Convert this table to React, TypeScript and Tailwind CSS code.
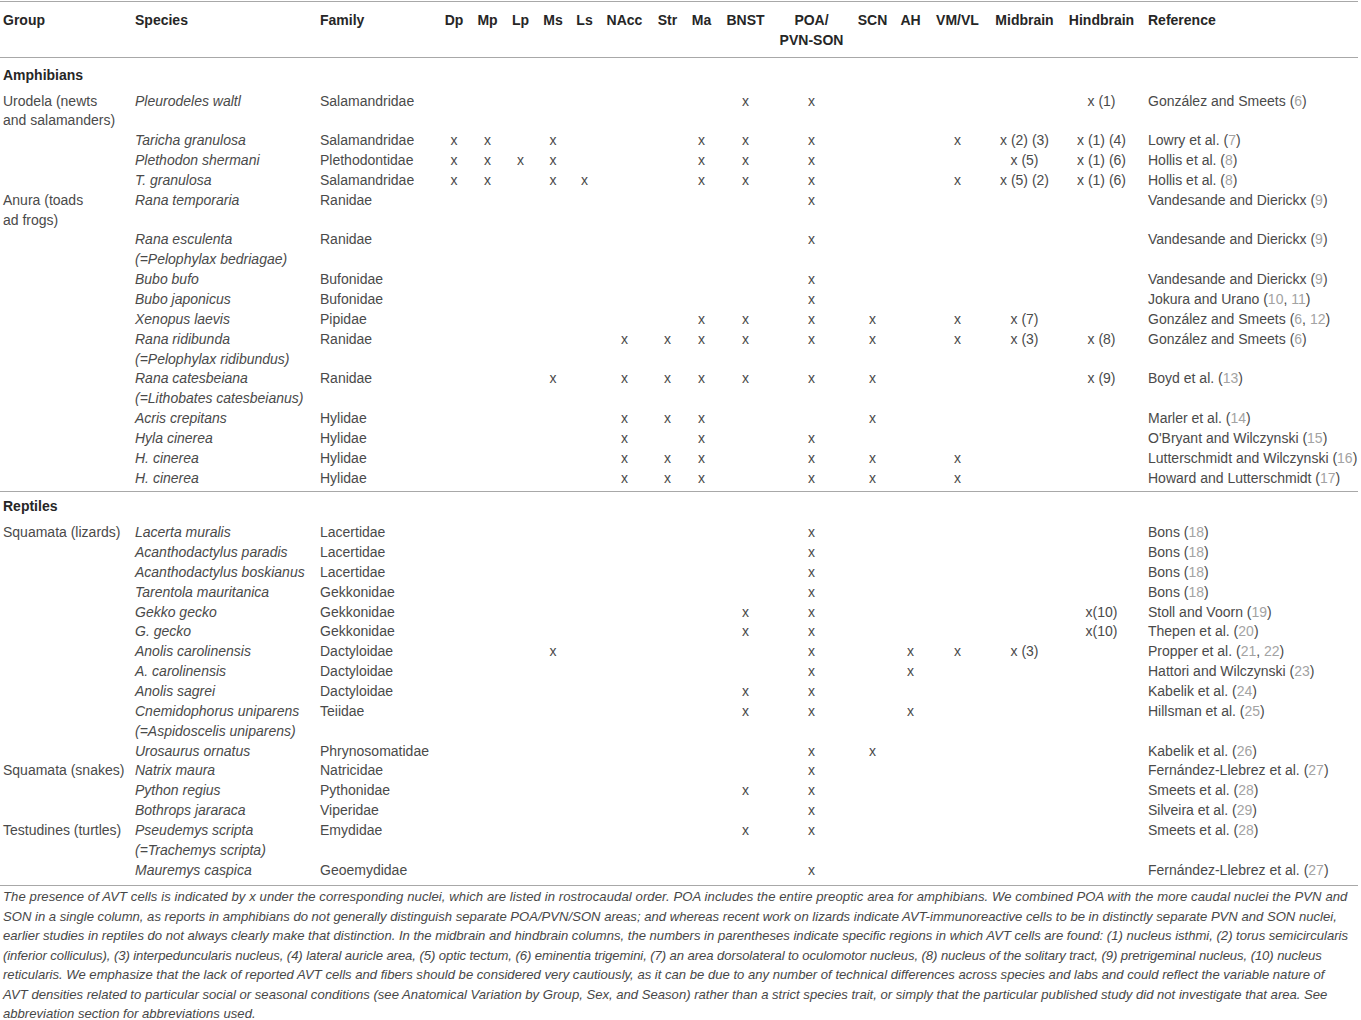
import React from "react";

const GRID =
  "grid grid-cols-[135px_185px_117px_34px_33px_33px_32px_31px_49px_37px_31px_57px_75px_47px_29px_65px_69px_85px_1fr]";

const KEYS = ["Dp", "Mp", "Lp", "Ms", "Ls", "NAcc", "Str", "Ma", "BNST", "POA", "SCN", "AH", "VM", "Mid", "Hind"] as const;

type Row = {
  g?: string[];
  s: string[];
  f: string;
  m: Partial<Record<(typeof KEYS)[number], string>>;
  r: string;
  n: string[];
};

const amphibians: Row[] = [
  { g: ["Urodela (newts", "and salamanders)"], s: ["Pleurodeles waltl"], f: "Salamandridae", m: { BNST: "x", POA: "x", Hind: "x (1)" }, r: "González and Smeets", n: ["6"] },
  { s: ["Taricha granulosa"], f: "Salamandridae", m: { Dp: "x", Mp: "x", Ms: "x", Ma: "x", BNST: "x", POA: "x", VM: "x", Mid: "x (2) (3)", Hind: "x (1) (4)" }, r: "Lowry et al.", n: ["7"] },
  { s: ["Plethodon shermani"], f: "Plethodontidae", m: { Dp: "x", Mp: "x", Lp: "x", Ms: "x", Ma: "x", BNST: "x", POA: "x", Mid: "x (5)", Hind: "x (1) (6)" }, r: "Hollis et al.", n: ["8"] },
  { s: ["T. granulosa"], f: "Salamandridae", m: { Dp: "x", Mp: "x", Ms: "x", Ls: "x", Ma: "x", BNST: "x", POA: "x", VM: "x", Mid: "x (5) (2)", Hind: "x (1) (6)" }, r: "Hollis et al.", n: ["8"] },
  { g: ["Anura (toads", "ad frogs)"], s: ["Rana temporaria"], f: "Ranidae", m: { POA: "x" }, r: "Vandesande and Dierickx", n: ["9"] },
  { s: ["Rana esculenta", "(=Pelophylax bedriagae)"], f: "Ranidae", m: { POA: "x" }, r: "Vandesande and Dierickx", n: ["9"] },
  { s: ["Bubo bufo"], f: "Bufonidae", m: { POA: "x" }, r: "Vandesande and Dierickx", n: ["9"] },
  { s: ["Bubo japonicus"], f: "Bufonidae", m: { POA: "x" }, r: "Jokura and Urano", n: ["10", "11"] },
  { s: ["Xenopus laevis"], f: "Pipidae", m: { Ma: "x", BNST: "x", POA: "x", SCN: "x", VM: "x", Mid: "x (7)" }, r: "González and Smeets", n: ["6", "12"] },
  { s: ["Rana ridibunda", "(=Pelophylax ridibundus)"], f: "Ranidae", m: { NAcc: "x", Str: "x", Ma: "x", BNST: "x", POA: "x", SCN: "x", VM: "x", Mid: "x (3)", Hind: "x (8)" }, r: "González and Smeets", n: ["6"] },
  { s: ["Rana catesbeiana", "(=Lithobates catesbeianus)"], f: "Ranidae", m: { Ms: "x", NAcc: "x", Str: "x", Ma: "x", BNST: "x", POA: "x", SCN: "x", Hind: "x (9)" }, r: "Boyd et al.", n: ["13"] },
  { s: ["Acris crepitans"], f: "Hylidae", m: { NAcc: "x", Str: "x", Ma: "x", SCN: "x" }, r: "Marler et al.", n: ["14"] },
  { s: ["Hyla cinerea"], f: "Hylidae", m: { NAcc: "x", Ma: "x", POA: "x" }, r: "O'Bryant and Wilczynski", n: ["15"] },
  { s: ["H. cinerea"], f: "Hylidae", m: { NAcc: "x", Str: "x", Ma: "x", POA: "x", SCN: "x", VM: "x" }, r: "Lutterschmidt and Wilczynski", n: ["16"] },
  { s: ["H. cinerea"], f: "Hylidae", m: { NAcc: "x", Str: "x", Ma: "x", POA: "x", SCN: "x", VM: "x" }, r: "Howard and Lutterschmidt", n: ["17"] },
];

const reptiles: Row[] = [
  { g: ["Squamata (lizards)"], s: ["Lacerta muralis"], f: "Lacertidae", m: { POA: "x" }, r: "Bons", n: ["18"] },
  { s: ["Acanthodactylus paradis"], f: "Lacertidae", m: { POA: "x" }, r: "Bons", n: ["18"] },
  { s: ["Acanthodactylus boskianus"], f: "Lacertidae", m: { POA: "x" }, r: "Bons", n: ["18"] },
  { s: ["Tarentola mauritanica"], f: "Gekkonidae", m: { POA: "x" }, r: "Bons", n: ["18"] },
  { s: ["Gekko gecko"], f: "Gekkonidae", m: { BNST: "x", POA: "x", Hind: "x(10)" }, r: "Stoll and Voorn", n: ["19"] },
  { s: ["G. gecko"], f: "Gekkonidae", m: { BNST: "x", POA: "x", Hind: "x(10)" }, r: "Thepen et al.", n: ["20"] },
  { s: ["Anolis carolinensis"], f: "Dactyloidae", m: { Ms: "x", POA: "x", AH: "x", VM: "x", Mid: "x (3)" }, r: "Propper et al.", n: ["21", "22"] },
  { s: ["A. carolinensis"], f: "Dactyloidae", m: { POA: "x", AH: "x" }, r: "Hattori and Wilczynski", n: ["23"] },
  { s: ["Anolis sagrei"], f: "Dactyloidae", m: { BNST: "x", POA: "x" }, r: "Kabelik et al.", n: ["24"] },
  { s: ["Cnemidophorus uniparens", "(=Aspidoscelis uniparens)"], f: "Teiidae", m: { BNST: "x", POA: "x", AH: "x" }, r: "Hillsman et al.", n: ["25"] },
  { s: ["Urosaurus ornatus"], f: "Phrynosomatidae", m: { POA: "x", SCN: "x" }, r: "Kabelik et al.", n: ["26"] },
  { g: ["Squamata (snakes)"], s: ["Natrix maura"], f: "Natricidae", m: { POA: "x" }, r: "Fernández-Llebrez et al.", n: ["27"] },
  { s: ["Python regius"], f: "Pythonidae", m: { BNST: "x", POA: "x" }, r: "Smeets et al.", n: ["28"] },
  { s: ["Bothrops jararaca"], f: "Viperidae", m: { POA: "x" }, r: "Silveira et al.", n: ["29"] },
  { g: ["Testudines (turtles)"], s: ["Pseudemys scripta", "(=Trachemys scripta)"], f: "Emydidae", m: { BNST: "x", POA: "x" }, r: "Smeets et al.", n: ["28"] },
  { s: ["Mauremys caspica"], f: "Geoemydidae", m: { POA: "x" }, r: "Fernández-Llebrez et al.", n: ["27"] },
];

const HEAD: { k: string; label: React.ReactNode }[] = [
  { k: "Dp", label: "Dp" },
  { k: "Mp", label: "Mp" },
  { k: "Lp", label: "Lp" },
  { k: "Ms", label: "Ms" },
  { k: "Ls", label: "Ls" },
  { k: "NAcc", label: "NAcc" },
  { k: "Str", label: "Str" },
  { k: "Ma", label: "Ma" },
  { k: "BNST", label: "BNST" },
  { k: "POA", label: (<>POA/<br />PVN-SON</>) },
  { k: "SCN", label: "SCN" },
  { k: "AH", label: "AH" },
  { k: "VM", label: "VM/VL" },
  { k: "Mid", label: "Midbrain" },
  { k: "Hind", label: "Hindbrain" },
];

function Lines({ items }: { items: string[] }) {
  return (
    <>
      {items.map((t, i) => (
        <div key={i} className="whitespace-nowrap">
          {t}
        </div>
      ))}
    </>
  );
}

function DataRow({ row }: { row: Row }) {
  return (
    <div className={`${GRID} leading-[19.84px]`}>
      <div className="pl-[3px]">{row.g ? <Lines items={row.g} /> : null}</div>
      <div className="italic">
        <Lines items={row.s} />
      </div>
      <div className="whitespace-nowrap">{row.f}</div>
      {KEYS.map((k) => (
        <div key={k} className="text-center whitespace-nowrap">
          {row.m[k] ?? ""}
        </div>
      ))}
      <div className="pl-[4px] whitespace-nowrap">
        {row.r} (
        {row.n.map((n, i) => (
          <React.Fragment key={i}>
            {i > 0 ? ", " : ""}
            <span className="text-[#a3a3a3]">{n}</span>
          </React.Fragment>
        ))}
        )
      </div>
    </div>
  );
}

const FOOT: { t: string; c: string }[] = [
  { c: "tracking-[0.085px]", t: "The presence of AVT cells is indicated by x under the corresponding nuclei, which are listed in rostrocaudal order. POA includes the entire preoptic area for amphibians. We combined POA with the more caudal nuclei the PVN and" },
  { c: "", t: "SON in a single column, as reports in amphibians do not generally distinguish separate POA/PVN/SON areas; and whereas recent work on lizards indicate AVT-immunoreactive cells to be in distinctly separate PVN and SON nuclei," },
  { c: "tracking-[-0.01px]", t: "earlier studies in reptiles do not always clearly make that distinction. In the midbrain and hindbrain columns, the numbers in parentheses indicate specific regions in which AVT cells are found: (1) nucleus isthmi, (2) torus semicircularis" },
  { c: "tracking-[-0.08px]", t: "(inferior colliculus), (3) interpeduncularis nucleus, (4) lateral auricle area, (5) optic tectum, (6) eminentia trigemini, (7) an area dorsolateral to oculomotor nucleus, (8) nucleus of the solitary tract, (9) pretrigeminal nucleus, (10) nucleus" },
  { c: "", t: "reticularis. We emphasize that the lack of reported AVT cells and fibers should be considered very cautiously, as it can be due to any number of technical differences across species and labs and could reflect the variable nature of" },
  { c: "", t: "AVT densities related to particular social or seasonal conditions (see Anatomical Variation by Group, Sex, and Season) rather than a strict species trait, or simply that the particular published study did not investigate that area. See" },
  { c: "", t: "abbreviation section for abbreviations used." },
];

export default function App() {
  return (
    <div className="w-[1361px] h-[1020px] overflow-hidden bg-white font-['Liberation_Sans',Arial,sans-serif] text-[14px] text-[#4a4a4a]">
      <div className="w-[1358px] pt-[1px]">
        {/* header */}
        <div className={`${GRID} border-t-[1.5px] border-b-[1.5px] border-[#a8a8a8] pt-[9px] pb-[6px] leading-[19.84px] font-bold text-[#262626]`}>
          <div className="pl-[3px]">Group</div>
          <div>Species</div>
          <div>Family</div>
          {HEAD.map((h) => (
            <div key={h.k} className="text-center whitespace-nowrap">
              {h.label}
            </div>
          ))}
          <div className="pl-[4px]">Reference</div>
        </div>

        {/* amphibians */}
        <div className="pt-[8px] pb-[6px] pl-[3px] leading-[19.84px] font-bold text-[#262626]">Amphibians</div>
        {amphibians.map((r, i) => (
          <DataRow key={i} row={r} />
        ))}
        <div className="mt-[3px] border-t-[1.5px] border-[#a8a8a8]" />

        {/* reptiles */}
        <div className="pt-[5px] pb-[6px] pl-[3px] leading-[19.84px] font-bold text-[#262626]">Reptiles</div>
        {reptiles.map((r, i) => (
          <DataRow key={i} row={r} />
        ))}
        <div className="mt-[5px] border-t-[1.5px] border-[#a8a8a8]" />

        {/* footnote */}
        <div className="pl-[3px] pt-[1px] text-[13.1px] italic leading-[19.5px] text-[#474747]">
          {FOOT.map((l, i) => (
            <div key={i} className={`whitespace-nowrap ${l.c}`}>
              {l.t}
            </div>
          ))}
        </div>
      </div>
    </div>
  );
}
